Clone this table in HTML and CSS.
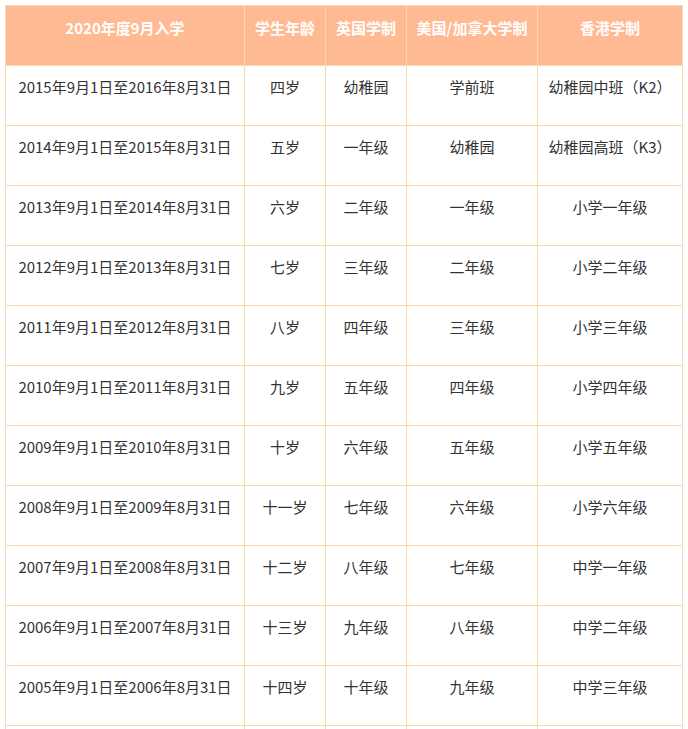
FILE: index.html
```html
<!DOCTYPE html>
<html lang="zh">
<head>
<meta charset="utf-8">
<title>入学年龄对照表</title>
<link rel="stylesheet" href="styles.css">
</head>
<body>
<table class="grade-table">
  <colgroup>
    <col class="c1"><col class="c2"><col class="c3"><col class="c4"><col class="c5">
  </colgroup>
  <thead>
    <tr><th>2020年度9月入学</th><th>学生年龄</th><th>英国学制</th><th>美国/加拿大学制</th><th>香港学制</th></tr>
  </thead>
  <tbody>
    <tr><td>2015年9月1日至2016年8月31日</td><td>四岁</td><td>幼稚园</td><td>学前班</td><td>幼稚园中班（K2）</td></tr>
    <tr><td>2014年9月1日至2015年8月31日</td><td>五岁</td><td>一年级</td><td>幼稚园</td><td>幼稚园高班（K3）</td></tr>
    <tr><td>2013年9月1日至2014年8月31日</td><td>六岁</td><td>二年级</td><td>一年级</td><td>小学一年级</td></tr>
    <tr><td>2012年9月1日至2013年8月31日</td><td>七岁</td><td>三年级</td><td>二年级</td><td>小学二年级</td></tr>
    <tr><td>2011年9月1日至2012年8月31日</td><td>八岁</td><td>四年级</td><td>三年级</td><td>小学三年级</td></tr>
    <tr><td>2010年9月1日至2011年8月31日</td><td>九岁</td><td>五年级</td><td>四年级</td><td>小学四年级</td></tr>
    <tr><td>2009年9月1日至2010年8月31日</td><td>十岁</td><td>六年级</td><td>五年级</td><td>小学五年级</td></tr>
    <tr><td>2008年9月1日至2009年8月31日</td><td>十一岁</td><td>七年级</td><td>六年级</td><td>小学六年级</td></tr>
    <tr><td>2007年9月1日至2008年8月31日</td><td>十二岁</td><td>八年级</td><td>七年级</td><td>中学一年级</td></tr>
    <tr><td>2006年9月1日至2007年8月31日</td><td>十三岁</td><td>九年级</td><td>八年级</td><td>中学二年级</td></tr>
    <tr><td>2005年9月1日至2006年8月31日</td><td>十四岁</td><td>十年级</td><td>九年级</td><td>中学三年级</td></tr>
    <tr><td></td><td></td><td></td><td></td><td></td></tr>
  </tbody>
</table>
</body>
</html>
```
FILE: styles.css
```css
html, body {
  margin: 0;
  padding: 0;
  background: #fff;
}
body {
  padding: 5px 0 0 5px;
  font-family: "Noto Sans CJK SC", "Noto Sans", sans-serif;
  font-size: 15px;
  color: #333;
}
.grade-table {
  border-collapse: collapse;
  table-layout: fixed;
  width: 677px;
}
.c1 { width: 239px; }
.c2 { width: 81px; }
.c3 { width: 81px; }
.c4 { width: 131px; }
.c5 { width: 145px; }
.grade-table th,
.grade-table td {
  border: 1px solid #fcd9a8;
  text-align: center;
  vertical-align: top;
  height: 60px;
  box-sizing: border-box;
  padding: 9px 0 0 0;
  line-height: 24px;
  white-space: nowrap;
  overflow: hidden;
}
.grade-table th {
  background: #ffba93;
  color: #fff;
  font-weight: bold;
  padding-top: 10px;
}
```
